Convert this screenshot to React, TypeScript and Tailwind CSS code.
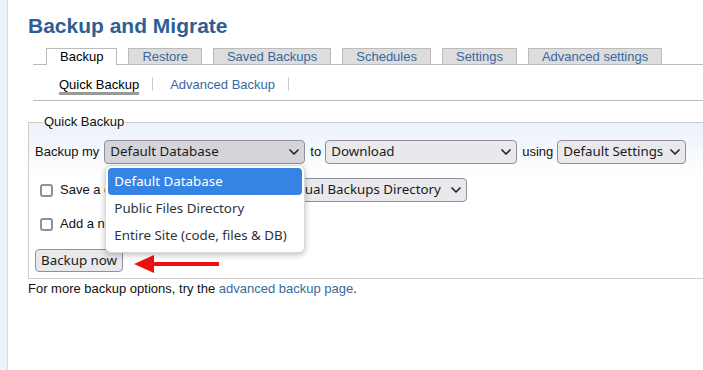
import React from "react";
import { ChevronDown } from "lucide-react";

const tabs = ["Backup", "Restore", "Saved Backups", "Schedules", "Settings", "Advanced settings"];

const sans = { fontFamily: '"Liberation Sans", Arial, sans-serif' };

function Select({
  value,
  width,
  open = false,
}: {
  value: string;
  width: string;
  open?: boolean;
}) {
  return (
    <div
      className={`${width} h-[24px] shrink-0 flex items-center justify-between pl-[5px] pr-[2px] border border-[#8f8f9d] rounded-[4px] text-[13.33px] text-[#1b1b1b] whitespace-nowrap overflow-hidden ${
        open ? "bg-[#d4d4da]" : "bg-[#e9e9ed]"
      }`}
      style={{ fontFamily: '"Noto Sans", sans-serif' }}
    >
      <span>{value}</span>
      <ChevronDown size={16} strokeWidth={2.5} className="shrink-0 text-[#222]" />
    </div>
  );
}

function Checkbox() {
  return <span className="w-[13px] h-[13px] shrink-0 rounded-[3px] border-2 border-[#8f8f9d] bg-white" />;
}

export default function App() {
  const options = ["Default Database", "Public Files Directory", "Entire Site (code, files & DB)"];

  return (
    <div className="flex min-h-[370px] bg-white overflow-hidden" style={sans}>
      {/* sidebar strip */}
      <div className="w-[7px] shrink-0 bg-[#edf1f9] border-r border-[#d6dce6] box-content" />

      <div className="flex-1 min-w-0 pl-[20px] -mr-[4px]">
        <h1 className="mt-[14px] text-[21px] leading-[24px] font-bold text-[#2f5e93]">
          Backup and Migrate
        </h1>

        {/* Primary tabs */}
        <ul className="mt-[10px] ml-[5px] pl-[13px] flex gap-[11px] border-b border-[#bbbbbb] h-[17px]">
          {tabs.map((t, i) => (
            <li
              key={t}
              className={`h-[17px] px-[13px] border-t border-l border-r border-[#bbbbbb] text-[13px] leading-[15px] whitespace-nowrap ${
                i === 0
                  ? "bg-white text-black"
                  : "bg-[#dddddd] text-[#3a689e] border-b"
              }`}
            >
              {t}
            </li>
          ))}
        </ul>

        {/* Secondary tabs */}
        <div className="ml-[5px] pl-[26px] pt-[12px] pb-[5px] flex items-start border-b border-[#bbbbbb] text-[13px] leading-[15px]">
          <span className="text-black border-b-[3px] border-[#999999]">Quick Backup</span>
          <span className="w-px h-[14px] bg-[#cccccc] ml-[13px] mr-[17px]" />
          <span className="text-[#3a689e]">Advanced Backup</span>
          <span className="w-px h-[14px] bg-[#cccccc] ml-[13px]" />
        </div>

        {/* Quick backup fieldset */}
        <fieldset className="mt-[13px] border border-[#cccccc] bg-linear-to-b from-[#ebf2fa] to-white to-[35%] pl-[6px] pt-[10px] pb-[6px] text-[13px] text-[#111]">
          <legend className="ml-[8px] px-[1px] leading-[16px]">Quick Backup</legend>

          <div className="h-[24px] flex items-center">
            <span>Backup my</span>
            <div className="relative ml-[5px]">
              <Select value="Default Database" width="w-[201px]" open />
              {/* open dropdown list */}
              <div
                className="absolute top-[25px] left-[1px] w-[200px] z-10 bg-white rounded-[6px] border border-[#d8d8d8] shadow-[0_2px_6px_rgba(0,0,0,0.25)] pt-[2px] pb-[3px] px-[2px] text-[13.33px]"
                style={{ fontFamily: '"Noto Sans", sans-serif' }}
              >
                {options.map((o, i) => (
                  <div
                    key={o}
                    className={`h-[27px] flex items-center pl-[6px] rounded-[4px] whitespace-nowrap ${
                      i === 0 ? "bg-[#3584e4] text-white" : "text-[#2e3436]"
                    }`}
                  >
                    {o}
                  </div>
                ))}
              </div>
            </div>
            <span className="ml-[5px]">to</span>
            <div className="ml-[4px]">
              <Select value="Download" width="w-[192px]" />
            </div>
            <span className="ml-[5px]">using</span>
            <div className="ml-[4px]">
              <Select value="Default Settings" width="w-[129px]" />
            </div>
          </div>

          <div className="mt-[14px] h-[24px] flex items-center pl-[5px]">
            <Checkbox />
            <span className="ml-[7px] w-[207px] whitespace-nowrap overflow-hidden">
              Save a copy to the server in
            </span>
            <div className="ml-[4px]">
              <Select value="Manual Backups Directory" width="w-[196px]" />
            </div>
          </div>

          <div className="mt-[10px] h-[24px] flex items-center pl-[5px]">
            <Checkbox />
            <span className="ml-[7px]">Add a note to the backup</span>
          </div>

          <div className="mt-[13px] h-[23px] flex items-start">
            <button
              className="h-[23px] px-[5px] border border-[#8f8f9d] rounded-[4px] bg-[#e9e9ed] text-[13.33px] leading-[21px] text-[#1b1b1b]"
              style={{ fontFamily: '"Noto Sans", sans-serif' }}
            >
              Backup now
            </button>
            <svg width="86" height="24" viewBox="0 0 86 24" className="ml-[11px] shrink-0">
              <polygon points="0,15 20,6 20,24" fill="#ee1111" />
              <rect x="17" y="13" width="68" height="4" fill="#ee1111" />
            </svg>
          </div>
        </fieldset>

        <p className="mt-[2px] text-[13px] leading-[15px] text-[#111]">
          For more backup options, try the{" "}
          <a className="text-[#3a689e]">advanced backup page</a>.
        </p>
      </div>
    </div>
  );
}
